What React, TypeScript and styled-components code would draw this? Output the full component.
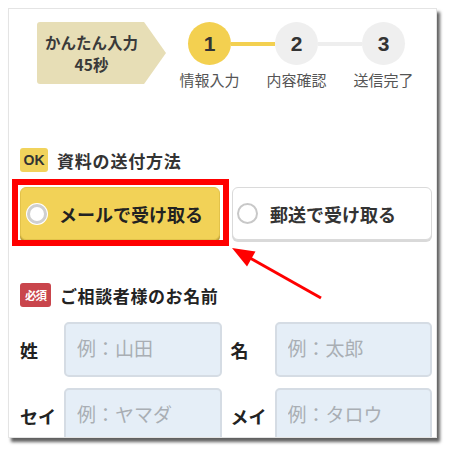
import styled, { createGlobalStyle } from "styled-components";

const GlobalStyle = createGlobalStyle`
  html, body {
    margin: 0;
    padding: 0;
    background: #ffffff;
  }
  body {
    font-family: "Noto Sans CJK JP", "Noto Sans", sans-serif;
    color: #333;
  }
`;

const Page = styled.div`
  position: relative;
  width: 450px;
  height: 451px;
  padding: 8px 0 0 8px;
  box-sizing: border-box;
`;

const Card = styled.div`
  width: 429px;
  height: 430px;
  box-sizing: border-box;
  border: 1px solid #e4e4e4;
  background: #fff;
  box-shadow: 3px 4px 3px rgba(0, 0, 0, 0.62);
  overflow: hidden;
  padding: 13px 4px 0 11px;
`;

const Header = styled.div`
  display: flex;
  align-items: flex-start;
  padding-left: 17px;
`;

const TimeBadge = styled.div`
  width: 129px;
  height: 62px;
  box-sizing: border-box;
  padding-right: 20px;
  background: #e7deb6;
  clip-path: polygon(0 0, 83% 0, 100% 50%, 83% 100%, 0 100%);
  border-radius: 3px 0 0 3px;
  display: flex;
  flex-direction: column;
  justify-content: center;
  align-items: center;
  font-size: 15.5px;
  font-weight: 700;
  line-height: 22px;
  color: #3a3a3a;
`;

const Steps = styled.div`
  display: flex;
  flex-direction: column;
`;

const StepTrack = styled.div`
  display: flex;
  align-items: center;
  padding-left: 22px;
`;

const Circle = styled.div<{ active?: boolean }>`
  width: 43px;
  height: 43px;
  border-radius: 50%;
  background: ${(p) => (p.active ? "#f3d050" : "#efefef")};
  display: flex;
  align-items: center;
  justify-content: center;
  font-family: "Liberation Sans", Arial, sans-serif;
  font-size: 21px;
  font-weight: 700;
  color: #333;
`;

const Connector = styled.div<{ active?: boolean }>`
  width: 44px;
  height: 4px;
  background: ${(p) => (p.active ? "#f3d050" : "#eeeeee")};
`;

const StepLabels = styled.div`
  display: grid;
  grid-template-columns: repeat(3, 87px);
  margin-top: 6px;
`;

const StepLabel = styled.div`
  text-align: center;
  font-size: 15px;
  line-height: 18px;
  color: #555;
`;

const SectionTitle = styled.div<{ top: number }>`
  display: flex;
  align-items: center;
  gap: 9px;
  margin-top: ${(p) => p.top}px;
  height: 24px;
`;

const Tag = styled.span<{ tone: "ok" | "required" }>`
  width: ${(p) => (p.tone === "ok" ? "28px" : "31px")};
  height: 24px;
  border-radius: 3px;
  display: flex;
  align-items: center;
  justify-content: center;
  font-weight: 700;
  font-size: ${(p) => (p.tone === "ok" ? "14px" : "11.5px")};
  letter-spacing: ${(p) => (p.tone === "ok" ? "0" : "-1px")};
  background: ${(p) => (p.tone === "ok" ? "#f1d35c" : "#c9454c")};
  color: ${(p) => (p.tone === "ok" ? "#333" : "#fff")};
  font-family: ${(p) =>
    p.tone === "ok"
      ? '"Liberation Sans", Arial, sans-serif'
      : '"Noto Sans CJK JP", sans-serif'};
`;

const TitleText = styled.span<{ strong?: boolean }>`
  font-size: 17px;
  font-weight: ${(p) => (p.strong ? 700 : 600)};
  color: ${(p) => (p.strong ? "#222" : "#333")};
  letter-spacing: ${(p) => (p.strong ? "0.6px" : "0.8px")};
`;

const Choices = styled.div`
  display: flex;
  gap: 12px;
  margin-top: 15px;
`;

const Choice = styled.div<{ selected?: boolean }>`
  flex: 1;
  height: 53px;
  box-sizing: border-box;
  border-radius: 6px;
  display: flex;
  align-items: center;
  gap: 12px;
  padding-left: 4px;
  font-size: 18px;
  font-weight: 700;
  color: ${(p) => (p.selected ? "#222" : "#333")};
  background: ${(p) => (p.selected ? "#f2d257" : "#fff")};
  border: 1px solid ${(p) => (p.selected ? "#e2c24a" : "#dadada")};
  box-shadow: ${(p) =>
    p.selected ? "0 3px 0 #bfa33d" : "0 2px 0 #d9d9d9"};
`;

const Radio = styled.span<{ selected?: boolean }>`
  width: ${(p) => (p.selected ? "14px" : "17px")};
  height: ${(p) => (p.selected ? "14px" : "17px")};
  border-radius: 50%;
  background: #fff;
  border: ${(p) => (p.selected ? "3px solid #cfcfcf" : "2px solid #c8c8c8")};
  box-shadow: ${(p) => (p.selected ? "0 0 0 1px #fff" : "none")};
  margin-left: ${(p) => (p.selected ? "2px" : "0")};
  flex-shrink: 0;
`;

const NameRows = styled.div`
  display: flex;
  flex-direction: column;
  gap: 11px;
  margin-top: 15px;
`;

const NameRow = styled.div`
  display: flex;
  gap: 9px;
`;

const Field = styled.label`
  flex: 1;
  min-width: 0;
  display: flex;
  align-items: center;
`;

const FieldLabel = styled.span`
  width: 44px;
  flex-shrink: 0;
  font-size: 18px;
  font-weight: 700;
  color: #222;
`;

const Input = styled.input`
  flex: 1;
  width: 100%;
  min-width: 0;
  height: 55px;
  box-sizing: border-box;
  border: 2px solid #d5dce4;
  border-radius: 5px;
  background: #e5eef7;
  padding: 0 0 4px 11px;
  font-family: "Noto Sans CJK JP", sans-serif;
  font-size: 19px;
  outline: none;
  &::placeholder {
    color: #a9aeb4;
  }
`;

const Highlight = styled.div`
  position: absolute;
  left: 12px;
  top: 179px;
  width: 217px;
  height: 67px;
  box-sizing: border-box;
  border: 6px solid #ff0000;
  pointer-events: none;
`;

const Arrow = styled.svg`
  position: absolute;
  left: 0;
  top: 0;
  pointer-events: none;
`;

const fields: [string, string][][] = [
  [
    ["姓", "例：山田"],
    ["名", "例：太郎"],
  ],
  [
    ["セイ", "例：ヤマダ"],
    ["メイ", "例：タロウ"],
  ],
];

export default function App() {
  return (
    <Page>
      <GlobalStyle />
      <Card>
        <Header>
          <TimeBadge>
            <span>かんたん入力</span>
            <span>45秒</span>
          </TimeBadge>
          <Steps>
            <StepTrack>
              <Circle active>1</Circle>
              <Connector active />
              <Circle>2</Circle>
              <Connector />
              <Circle>3</Circle>
            </StepTrack>
            <StepLabels>
              <StepLabel>情報入力</StepLabel>
              <StepLabel>内容確認</StepLabel>
              <StepLabel>送信完了</StepLabel>
            </StepLabels>
          </Steps>
        </Header>

        <SectionTitle top={59}>
          <Tag tone="ok">OK</Tag>
          <TitleText>資料の送付方法</TitleText>
        </SectionTitle>

        <Choices>
          <Choice selected>
            <Radio selected />
            メールで受け取る
          </Choice>
          <Choice>
            <Radio />
            郵送で受け取る
          </Choice>
        </Choices>

        <SectionTitle top={43}>
          <Tag tone="required">必須</Tag>
          <TitleText strong>ご相談者様のお名前</TitleText>
        </SectionTitle>

        <NameRows>
          {fields.map((row, i) => (
            <NameRow key={i}>
              {row.map(([label, ph]) => (
                <Field key={label}>
                  <FieldLabel>{label}</FieldLabel>
                  <Input placeholder={ph} />
                </Field>
              ))}
            </NameRow>
          ))}
        </NameRows>
      </Card>

      <Highlight />
      <Arrow width="450" height="451" viewBox="0 0 450 451">
        <line x1="321" y1="298" x2="250" y2="258" stroke="#ff0000" strokeWidth="3" />
        <polygon points="232,248 255.5,251.5 247,266.5" fill="#ff0000" />
      </Arrow>
    </Page>
  );
}
